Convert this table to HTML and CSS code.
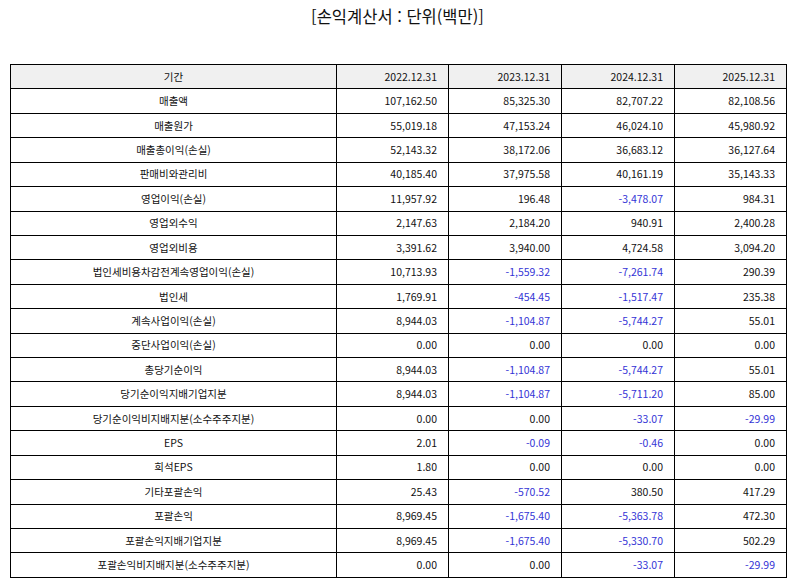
FILE: index.html
```html
<!DOCTYPE html>
<html lang="ko">
<head>
<meta charset="utf-8">
<link rel="stylesheet" href="styles.css">
</head>
<body>
<div class="page">
  <h1 class="title">[손익계산서 : 단위(백만)]</h1>
  <table class="fin">
    <colgroup>
      <col class="c-label"><col class="c-num"><col class="c-num2"><col class="c-num2"><col class="c-num">
    </colgroup>
    <thead>
      <tr><th class="lbl">기간</th><th>2022.12.31</th><th>2023.12.31</th><th>2024.12.31</th><th>2025.12.31</th></tr>
    </thead>
    <tbody>
      <tr><td class="lbl">매출액</td><td>107,162.50</td><td>85,325.30</td><td>82,707.22</td><td>82,108.56</td></tr>
      <tr><td class="lbl">매출원가</td><td>55,019.18</td><td>47,153.24</td><td>46,024.10</td><td>45,980.92</td></tr>
      <tr><td class="lbl">매출총이익(손실)</td><td>52,143.32</td><td>38,172.06</td><td>36,683.12</td><td>36,127.64</td></tr>
      <tr><td class="lbl">판매비와관리비</td><td>40,185.40</td><td>37,975.58</td><td>40,161.19</td><td>35,143.33</td></tr>
      <tr><td class="lbl">영업이익(손실)</td><td>11,957.92</td><td>196.48</td><td class="neg">-3,478.07</td><td>984.31</td></tr>
      <tr><td class="lbl">영업외수익</td><td>2,147.63</td><td>2,184.20</td><td>940.91</td><td>2,400.28</td></tr>
      <tr><td class="lbl">영업외비용</td><td>3,391.62</td><td>3,940.00</td><td>4,724.58</td><td>3,094.20</td></tr>
      <tr><td class="lbl">법인세비용차감전계속영업이익(손실)</td><td>10,713.93</td><td class="neg">-1,559.32</td><td class="neg">-7,261.74</td><td>290.39</td></tr>
      <tr><td class="lbl">법인세</td><td>1,769.91</td><td class="neg">-454.45</td><td class="neg">-1,517.47</td><td>235.38</td></tr>
      <tr><td class="lbl">계속사업이익(손실)</td><td>8,944.03</td><td class="neg">-1,104.87</td><td class="neg">-5,744.27</td><td>55.01</td></tr>
      <tr><td class="lbl">중단사업이익(손실)</td><td>0.00</td><td>0.00</td><td>0.00</td><td>0.00</td></tr>
      <tr><td class="lbl">총당기순이익</td><td>8,944.03</td><td class="neg">-1,104.87</td><td class="neg">-5,744.27</td><td>55.01</td></tr>
      <tr><td class="lbl">당기순이익지배기업지분</td><td>8,944.03</td><td class="neg">-1,104.87</td><td class="neg">-5,711.20</td><td>85.00</td></tr>
      <tr><td class="lbl">당기순이익비지배지분(소수주주지분)</td><td>0.00</td><td>0.00</td><td class="neg">-33.07</td><td class="neg">-29.99</td></tr>
      <tr><td class="lbl">EPS</td><td>2.01</td><td class="neg">-0.09</td><td class="neg">-0.46</td><td>0.00</td></tr>
      <tr><td class="lbl">희석EPS</td><td>1.80</td><td>0.00</td><td>0.00</td><td>0.00</td></tr>
      <tr><td class="lbl">기타포괄손익</td><td>25.43</td><td class="neg">-570.52</td><td>380.50</td><td>417.29</td></tr>
      <tr><td class="lbl">포괄손익</td><td>8,969.45</td><td class="neg">-1,675.40</td><td class="neg">-5,363.78</td><td>472.30</td></tr>
      <tr><td class="lbl">포괄손익지배기업지분</td><td>8,969.45</td><td class="neg">-1,675.40</td><td class="neg">-5,330.70</td><td>502.29</td></tr>
      <tr><td class="lbl">포괄손익비지배지분(소수주주지분)</td><td>0.00</td><td>0.00</td><td class="neg">-33.07</td><td class="neg">-29.99</td></tr>
    </tbody>
  </table>
</div>
</body>
</html>
```
FILE: styles.css
```css
html, body {
  margin: 0;
  padding: 0;
  background: #fff;
}
.page {
  width: 795px;
  height: 586px;
  font-family: "Noto Sans CJK KR", "Noto Sans", sans-serif;
  color: #000;
}
.title {
  margin: 0;
  height: 64px;
  padding-top: 5px;
  box-sizing: border-box;
  text-align: center;
  font-size: 16.5px;
  font-weight: normal;
  line-height: 22px;
  color: #111;
}
.fin {
  margin-left: 10px;
  width: 776px;
  border-collapse: collapse;
  table-layout: fixed;
  font-size: 10.5px;
  color: #111;
}
.c-label { width: 326px; }
.c-num { width: 112px; }
.c-num2 { width: 113px; }
.fin th, .fin td {
  border: 1px solid #000;
  height: 24.43px;
  padding: 0 11px 0 0;
  text-align: right;
  font-weight: normal;
  line-height: 14px;
  white-space: nowrap;
  box-sizing: border-box;
}
.fin thead th {
  background: #f0f0f0;
}
.fin .lbl {
  text-align: center;
  padding: 0;
}
.fin .neg {
  color: #3434d6;
}
```
